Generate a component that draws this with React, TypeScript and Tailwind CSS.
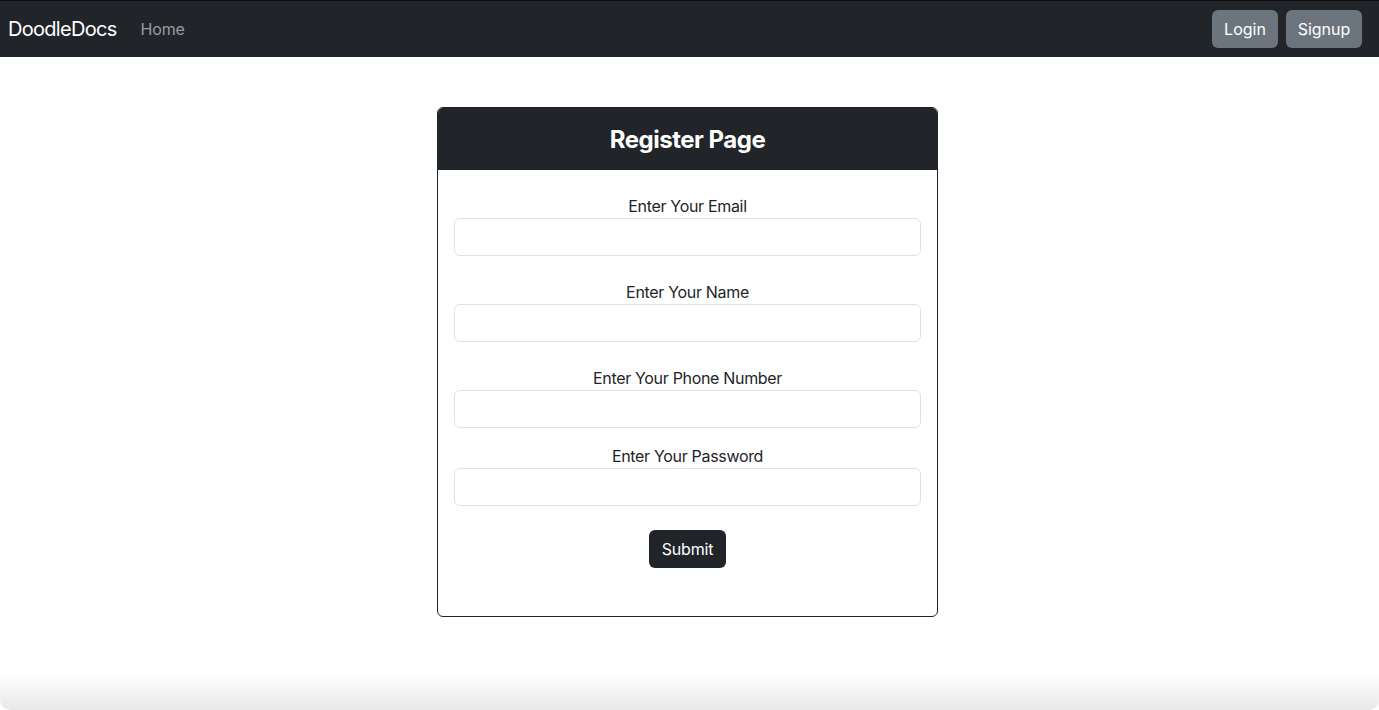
import React from "react";

const font = { fontFamily: "Inter, 'Noto Sans', 'Liberation Sans', sans-serif" };

function Field({ label, className = "" }: { label: string; className?: string }) {
  return (
    <div className={`flex flex-col items-center ${className}`}>
      <label className="text-[16px] leading-[24px] text-[#212529] tracking-[-0.02em]">{label}</label>
      <input
        type="text"
        className="w-full h-[38px] rounded-[6px] border border-[#dee2e6] bg-white px-3 outline-none"
      />
    </div>
  );
}

export default function App() {
  return (
    <div className="relative min-h-[710px] bg-white overflow-hidden" style={font}>
      <nav className="h-[57px] bg-[#212529] border-t border-[#0b0c14] flex items-center px-2">
        <span className="text-white text-[20px] leading-[30px] mr-6 tracking-[-0.035em]">DoodleDocs</span>
        <span className="text-[rgba(255,255,255,0.55)] text-[16px] tracking-[-0.01em]">Home</span>
        <div className="ml-auto flex items-center gap-2 pr-[9px]">
          <button className="h-[38px] w-[66px] rounded-[6px] bg-[#6c757d] text-white text-[16px]">Login</button>
          <button className="h-[38px] w-[76px] rounded-[6px] bg-[#6c757d] text-white text-[16px]">Signup</button>
        </div>
      </nav>

      <div className="flex justify-center pt-[50px]">
        <div className="w-[501px] h-[510px] border border-[#212529] rounded-[6px] overflow-hidden flex flex-col ml-[-4px]">
          <div className="h-[62px] bg-[#212529] flex items-center justify-center pt-[2px]">
            <h1 className="text-white text-[24px] font-bold leading-none tracking-[-0.02em]">Register Page</h1>
          </div>
          <div className="px-4 pt-[24px] flex flex-col">
            <Field label="Enter Your Email" />
            <Field label="Enter Your Name" className="mt-[24px]" />
            <Field label="Enter Your Phone Number" className="mt-[24px]" />
            <Field label="Enter Your Password" className="mt-[16px]" />
            <div className="flex justify-center mt-[24px]">
              <button className="h-[38px] w-[77px] rounded-[6px] bg-[#212529] text-white text-[16px] tracking-[-0.01em]">Submit</button>
            </div>
          </div>
        </div>
      </div>

      <div className="pointer-events-none absolute left-0 right-0 bottom-0 h-[36px] bg-gradient-to-b from-transparent to-[rgba(0,0,0,0.09)] rounded-b-[10px]" />
    </div>
  );
}
